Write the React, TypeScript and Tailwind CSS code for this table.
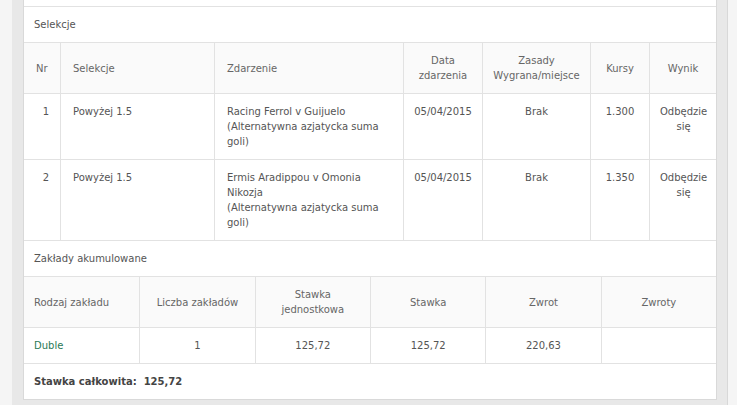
import React from "react";

interface Selection {
  nr: number;
  pick: string;
  event: string;
  market: string;
  date: string;
  rules: string;
  odds: string;
  result: string;
}

const selections: Selection[] = [
  {
    nr: 1,
    pick: "Powyżej 1.5",
    event: "Racing Ferrol v Guijuelo",
    market: "(Alternatywna azjatycka suma goli)",
    date: "05/04/2015",
    rules: "Brak",
    odds: "1.300",
    result: "Odbędzie się",
  },
  {
    nr: 2,
    pick: "Powyżej 1.5",
    event: "Ermis Aradippou v Omonia Nikozja",
    market: "(Alternatywna azjatycka suma goli)",
    date: "05/04/2015",
    rules: "Brak",
    odds: "1.350",
    result: "Odbędzie się",
  },
];

const selCols = "grid grid-cols-[36px_154px_189px_79px_108px_59px_1fr]";
const accCols = "grid grid-cols-6";

const App: React.FC = () => {
  return (
    <div
      className="w-full h-[405px] overflow-hidden bg-[#f5f5f5] text-[10px] leading-[15px] text-[#555]"
      style={{ fontFamily: '"DejaVu Sans", Verdana, sans-serif' }}
    >
      <div className="ml-[12px] w-[716px] h-full bg-[#e8e8e8] border-r border-[#d8d8d8] pl-[11px] pr-[10px]">
        <div className="bg-white border-x border-b border-[#d9d9d9]">
          <div className="h-[7px] border-b border-[#e2e2e2]" />

          {/* Selekcje */}
          <div className="h-[36px] flex items-center px-[10px] border-b border-[#e2e2e2]">Selekcje</div>
          <div className={`${selCols} h-[51px] bg-[#fafafa] text-[#666] border-b border-[#e2e2e2]`}>
            <div className="flex items-center px-[12px]">Nr</div>
            <div className="flex items-center px-[12px] border-l border-[#e2e2e2]">Selekcje</div>
            <div className="flex items-center px-[12px] border-l border-[#e2e2e2]">Zdarzenie</div>
            <div className="flex items-center justify-center text-center border-l border-[#e2e2e2]">Data<br />zdarzenia</div>
            <div className="flex items-center justify-center text-center border-l border-[#e2e2e2]">Zasady<br />Wygrana/miejsce</div>
            <div className="flex items-center justify-center border-l border-[#e2e2e2]">Kursy</div>
            <div className="flex items-center justify-center border-l border-[#e2e2e2]">Wynik</div>
          </div>
          {selections.map(s => (
            <div key={s.nr} className={`${selCols} border-b border-[#e2e2e2]`}>
              <div className="py-[10px] pr-[11px] text-right">{s.nr}</div>
              <div className="py-[10px] px-[12px] border-l border-[#e2e2e2]">{s.pick}</div>
              <div className="py-[10px] px-[12px] border-l border-[#e2e2e2]">
                {s.event}
                <br />
                {s.market}
              </div>
              <div className="py-[10px] text-center border-l border-[#e2e2e2]">{s.date}</div>
              <div className="py-[10px] text-center border-l border-[#e2e2e2]">{s.rules}</div>
              <div className="py-[10px] text-center border-l border-[#e2e2e2]">{s.odds}</div>
              <div className="py-[10px] px-[10px] text-center border-l border-[#e2e2e2]">{s.result}</div>
            </div>
          ))}

          {/* Zakłady akumulowane */}
          <div className="h-[36px] flex items-center px-[10px] border-b border-[#e2e2e2]">Zakłady akumulowane</div>
          <div className={`${accCols} h-[51px] bg-[#fafafa] text-[#666] border-b border-[#e2e2e2]`}>
            <div className="flex items-center px-[10px]">Rodzaj zakładu</div>
            <div className="flex items-center justify-center border-l border-[#e2e2e2]">Liczba zakładów</div>
            <div className="flex items-center justify-center text-center border-l border-[#e2e2e2]">Stawka<br />jednostkowa</div>
            <div className="flex items-center justify-center border-l border-[#e2e2e2]">Stawka</div>
            <div className="flex items-center justify-center border-l border-[#e2e2e2]">Zwrot</div>
            <div className="flex items-center justify-center border-l border-[#e2e2e2]">Zwroty</div>
          </div>
          <div className={`${accCols} h-[36px] border-b border-[#e2e2e2]`}>
            <div className="flex items-center px-[10px] text-[#2b7a57]">Duble</div>
            <div className="flex items-center justify-center border-l border-[#e2e2e2]">1</div>
            <div className="flex items-center justify-center border-l border-[#e2e2e2]">125,72</div>
            <div className="flex items-center justify-center border-l border-[#e2e2e2]">125,72</div>
            <div className="flex items-center justify-center border-l border-[#e2e2e2]">220,63</div>
            <div className="border-l border-[#e2e2e2]" />
          </div>
          <div className="h-[35px] flex items-center px-[10px] font-bold text-[#444]">
            Stawka całkowita:&nbsp; 125,72
          </div>
        </div>
      </div>
    </div>
  );
};

export default App;
